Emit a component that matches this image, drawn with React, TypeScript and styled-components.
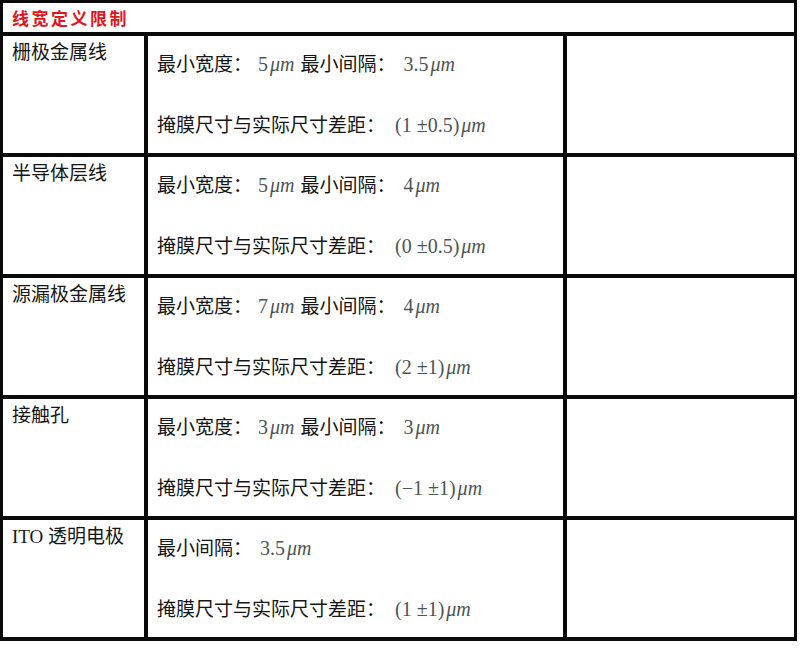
import React from "react";
import styled, { createGlobalStyle } from "styled-components";

const GlobalStyle = createGlobalStyle`
  html, body {
    margin: 0;
    padding: 0;
    background: #ffffff;
  }
`;

const Table = styled.div`
  display: grid;
  grid-template-columns: 141px 415px 227px;
  grid-template-rows: 29px repeat(5, 117px);
  gap: 4px;
  width: 797px;
  box-sizing: border-box;
  padding: 3px 3px 4px 3px;
  background: #0a0a0a;
  font-family: "Liberation Serif", "Noto Sans CJK SC", serif;
  color: #151515;
`;

const HeaderCell = styled.div`
  grid-column: 1 / -1;
  background: #ffffff;
  display: flex;
  align-items: center;
  padding-left: 9px;
  font-family: "Noto Sans CJK SC", sans-serif;
  font-size: 17px;
  font-weight: 700;
  letter-spacing: 2.5px;
  color: #e3141c;
`;

const NameCell = styled.div`
  background: #ffffff;
  padding: 4px 0 0 9px;
  font-size: 19px;
  line-height: 25px;
  white-space: nowrap;
`;

const SpecCell = styled.div`
  background: #ffffff;
  display: flex;
  flex-direction: column;
  gap: 36px;
  padding: 16px 0 0 9px;
  font-size: 19px;
  line-height: 24px;
  white-space: nowrap;
`;

const EmptyCell = styled.div`
  background: #ffffff;
`;

const SpecLine = styled.div`
  display: flex;
  align-items: baseline;
`;

const Val = styled.span<{ $lead?: number }>`
  font-size: 20px;
  color: #4d5454;
  margin-left: ${(p) => p.$lead ?? 6}px;
`;

const Unit = styled.i`
  font-size: 20px;
  color: #4d5454;
  margin-left: 2px;
  margin-right: 6px;
`;

interface IRow {
  name: string;
  width?: string;
  gap: string;
  diff: string;
}

const ROWS: IRow[] = [
  { name: "栅极金属线", width: "5", gap: "3.5", diff: "(1 ±0.5)" },
  { name: "半导体层线", width: "5", gap: "4", diff: "(0 ±0.5)" },
  { name: "源漏极金属线", width: "7", gap: "4", diff: "(2 ±1)" },
  { name: "接触孔", width: "3", gap: "3", diff: "(−1 ±1)" },
  { name: "ITO 透明电极", gap: "3.5", diff: "(1 ±1)" },
];

const App: React.FC = () => {
  return (
    <>
      <GlobalStyle />
      <Table>
        <HeaderCell>线宽定义限制</HeaderCell>
        {ROWS.map((row) => (
          <React.Fragment key={row.name}>
            <NameCell>{row.name}</NameCell>
            <SpecCell>
              <SpecLine>
                {row.width && (
                  <>
                    <span>最小宽度：</span>
                    <Val>{row.width}</Val>
                    <Unit>μm</Unit>
                  </>
                )}
                <span>最小间隔：</span>
                <Val $lead={8}>{row.gap}</Val>
                <Unit>μm</Unit>
              </SpecLine>
              <SpecLine>
                <span>掩膜尺寸与实际尺寸差距：</span>
                <Val $lead={10}>{row.diff}</Val>
                <Unit>μm</Unit>
              </SpecLine>
            </SpecCell>
            <EmptyCell />
          </React.Fragment>
        ))}
      </Table>
    </>
  );
};

export default App;
